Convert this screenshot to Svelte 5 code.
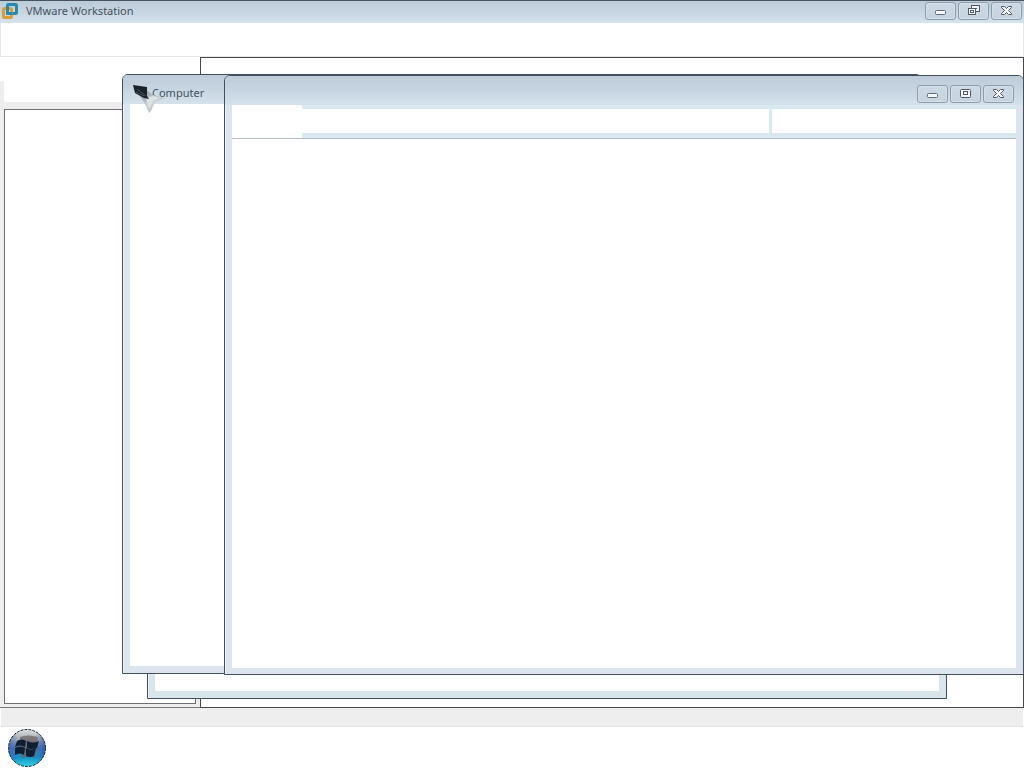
{#snippet captionButtons(middle)}
  <div class="caption-buttons">
    <button aria-label="Minimize">
      <svg width="14" height="12" viewBox="0 0 14 12"><rect x="1.5" y="5.5" width="10" height="4" rx="1" fill="#f5f7fb" stroke="#626a80" /></svg>
    </button>
    <button aria-label={middle === 'restore' ? 'Restore' : 'Maximize'}>
      {#if middle === 'restore'}
        <svg width="14" height="12" viewBox="0 0 14 12" fill="#f5f7fb" stroke="#50586e">
          <rect x="4.5" y="0.5" width="8" height="6" /><path d="M7 3.5h3" />
          <rect x="1.5" y="3.5" width="7" height="6" /><rect x="3.5" y="5.5" width="3" height="2" />
        </svg>
      {:else}
        <svg width="14" height="12" viewBox="0 0 14 12" fill="#f5f7fb" stroke="#50586e">
          <rect x="1.5" y="1.5" width="10" height="8" rx="1" /><rect x="4.5" y="3.5" width="4" height="3" />
        </svg>
      {/if}
    </button>
    <button aria-label="Close">
      <svg width="14" height="12" viewBox="0 0 14 12">
        <path d="M1.5 1.5H4.5l2 2 2-2h3v1l-3 3 3 3v1h-3l-2-2-2 2h-3v-1l3-3-3-3z" fill="#f5f7fb" stroke="#50586e" />
      </svg>
    </button>
  </div>
{/snippet}

<main class="desktop">
  <section class="workstation" aria-label="VMware Workstation">
    <header class="titlebar">
      <svg class="logo" width="18" height="18" viewBox="0 0 18 18" fill="none" stroke-width="3">
        <rect x="6.5" y="2.5" width="9" height="9" rx="1" stroke="#2789ad" />
        <rect x="2.5" y="6.5" width="8" height="9" rx="1" stroke="#dc9d37" />
        <path d="M6.5 5v6.5h5" stroke="#2789ad" />
      </svg>
      <h1>VMware Workstation</h1>
      {@render captionButtons('restore')}
    </header>
    <nav class="menu" aria-label="Menu"></nav>
    <div class="body">
      <aside class="sidebar">
        <div class="tabs"></div>
        <div class="library"></div>
      </aside>
      <div class="console"></div>
    </div>
    <footer class="status"></footer>
  </section>

  <footer class="taskbar">
    <button class="start" aria-label="Start">
      <svg width="40" height="40" viewBox="0 0 40 40">
        <defs>
          <linearGradient id="orb" x1="0" y1="0" x2="0" y2="1">
            <stop offset="0" stop-color="#e0e1e1" />
            <stop offset="0.28" stop-color="#a0a7ae" />
            <stop offset="0.5" stop-color="#4670a8" />
            <stop offset="0.75" stop-color="#168fc6" />
            <stop offset="1" stop-color="#32d5df" />
          </linearGradient>
          <linearGradient id="sides">
            <stop offset="0" stop-color="#3e67bb" stop-opacity="0.7" />
            <stop offset="0.25" stop-color="#3e67bb" stop-opacity="0" />
            <stop offset="0.75" stop-color="#3e67bb" stop-opacity="0" />
            <stop offset="1" stop-color="#304da8" stop-opacity="0.7" />
          </linearGradient>
        </defs>
        <circle cx="20" cy="20" r="18.5" fill="url(#orb)" />
        <circle cx="20" cy="20" r="18.5" fill="url(#sides)" stroke="#17213a" stroke-dasharray="3 1" />
        <path d="M13 9q8-3 18 0l-3 21q-6-3-13 0z" fill="#6c6063" opacity="0.7" />
        <path d="M10 13q5-3 9 0l-1 6q-5-3-10 0zM20 13q6 3 12 0l-2 7q-6 2-10 0zM8 20q5-3 10 0l-1 7q-4-3-9 0zM19 20q5 3 10 0l-2 8q-4 2-8 0z" fill="#101e32" />
      </svg>
    </button>
  </footer>

  <section class="window rear" aria-label="Window"><div class="client"></div></section>

  <section class="window computer" aria-label="Computer">
    <header class="window-title"><h2>Computer</h2></header>
    <div class="client"></div>
  </section>

  <section class="window front" aria-label="Explorer">
    <header class="window-title">{@render captionButtons('maximize')}</header>
    <div class="address">
      <div class="navigation"></div>
      <div class="path"></div>
      <div class="search"></div>
    </div>
    <div class="client"></div>
  </section>

  <svg class="pointer" width="34" height="30" viewBox="0 0 34 30" aria-hidden="true">
    <defs>
      <linearGradient id="tail" x1="0" y1="0" x2="1" y2="1">
        <stop offset="0" stop-color="#7d868b" /><stop offset="0.5" stop-color="#d0d5d7" /><stop offset="1" stop-color="#a4abad" />
      </linearGradient>
    </defs>
    <path d="M6 9l10-2 5 4 12 3-10 4-4 9-2 2-5-11z" fill="url(#tail)" />
    <path d="M14 14l7-2 6 2-6 3-4 8z" fill="#dde2e4" />
    <path d="M1 1l14 2v9l2 3-5-1L3 9z" fill="#192027" />
    <path d="M5 5l9 7M4 8l8 4" stroke="#48525a" />
  </svg>
</main>

<style>
  :global(body) {
    margin: 0;
  }
  .desktop {
    position: relative;
    display: flex;
    flex-direction: column;
    height: 100vh;
    overflow: hidden;
    background: #fff;
    color: #46525f;
    font-family: "Noto Sans", "Open Sans", sans-serif;
  }
  .desktop * {
    box-sizing: border-box;
  }
  h1, h2 {
    margin: 0;
    font-size: 11px;
    font-weight: 400;
    line-height: 16px;
  }
  .workstation {
    display: flex;
    flex: 1;
    flex-direction: column;
  }
  .titlebar {
    display: flex;
    align-items: center;
    height: 23px;
    padding: 0 2px 2px 1px;
    border-top: 1px solid #48535f;
    background: linear-gradient(#bccbd8, #c6d5e1 50%, #d7e3ed);
  }
  .titlebar h1 {
    flex: 1;
    padding-left: 7px;
  }
  .caption-buttons {
    display: flex;
    gap: 2px;
  }
  .caption-buttons button {
    display: grid;
    place-items: center;
    width: 31px;
    height: 18px;
    padding: 0;
    border: 1px solid #8e9cac;
    border-radius: 3px;
    background: linear-gradient(#ccd9e4, #c7d4e0);
    box-shadow: inset 0 0 0 1px #d3dfe9;
  }
  .menu {
    height: 34px;
    border: 1px solid #e8e8e8;
    border-top: 0;
  }
  .body {
    display: flex;
    flex: 1;
  }
  .sidebar {
    display: flex;
    flex-direction: column;
    width: 200px;
    padding: 24px 4px 3px 0;
    border-bottom: 1px solid #77797a;
    background: linear-gradient(#fff 24px, #ededed 24px);
  }
  .tabs {
    height: 21px;
    margin: 0 -4px 7px 4px;
    background: #fff;
  }
  .library {
    flex: 1;
    margin-left: 4px;
    border: 1px solid #6d7073;
    background: #fff;
  }
  .console {
    flex: 1;
    border: 1px solid #45494e;
    background: #fff;
  }
  .status {
    height: 19px;
    margin: 0 1px;
    border-bottom: 1px solid #e5e5e5;
    background: #eee;
  }
  .taskbar {
    height: 41px;
    padding: 1px 7px 0;
    background: #fff;
  }
  .start {
    display: block;
    padding: 0;
    border: 0;
    background: none;
  }
  .window {
    position: absolute;
    display: flex;
    flex-direction: column;
    padding: 0 7px 7px;
    border: 1px solid #424f5f;
    border-radius: 6px 6px 0 0;
    background: #dce4ed;
    box-shadow: inset 1px 1px #edf3f8;
  }
  .rear {
    inset: 99px 77px 69px 147px;
    background: #d8e5ea;
  }
  .computer {
    inset: 74px 102px 94px 122px;
  }
  .front {
    inset: 75px 0 93px 224px;
    padding-bottom: 6px;
  }
  .client {
    flex: 1;
    background: #fff;
  }
  .window-title {
    height: 29px;
    margin: 0 -7px;
    border-radius: 5px 5px 0 0;
    background: linear-gradient(#bdccd8, #c6d5e1 50%, #d5e2ec);
  }
  .computer .window-title {
    padding: 10px 0 0 29px;
  }
  .front .window-title {
    display: flex;
    justify-content: flex-end;
    padding: 9px 9px 0 0;
  }
  .address {
    display: flex;
    height: 34px;
    border-bottom: 1px solid #b3bdc5;
    background: #d8e9f4;
  }
  .navigation {
    width: 70px;
    background: #fff;
  }
  .path {
    flex: 1;
    margin: 4px 3px 5px 0;
    background: #fff;
  }
  .search {
    width: 244px;
    margin: 4px 0 5px;
    background: #fff;
  }
  .pointer {
    position: absolute;
    top: 84px;
    left: 132px;
  }
</style>
